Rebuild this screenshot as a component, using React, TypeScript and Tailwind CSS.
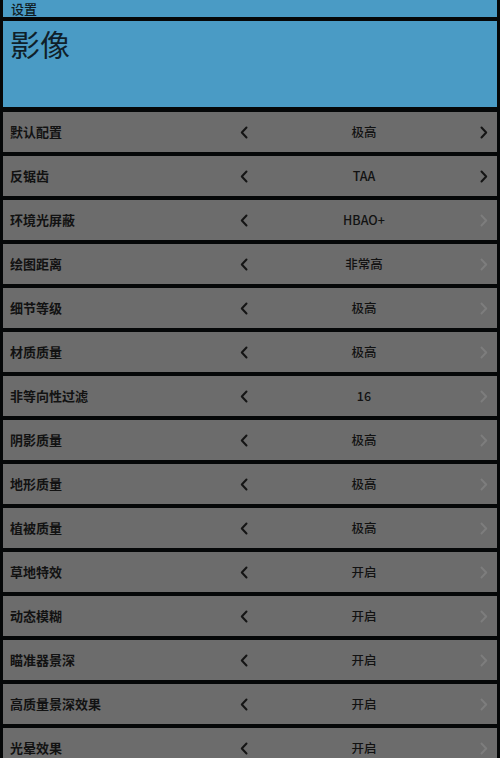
const rows: { label: string; value: string; next: boolean }[] = [
  { label: '默认配置', value: '极高', next: true },
  { label: '反锯齿', value: 'TAA', next: true },
  { label: '环境光屏蔽', value: 'HBAO+', next: false },
  { label: '绘图距离', value: '非常高', next: false },
  { label: '细节等级', value: '极高', next: false },
  { label: '材质质量', value: '极高', next: false },
  { label: '非等向性过滤', value: '16', next: false },
  { label: '阴影质量', value: '极高', next: false },
  { label: '地形质量', value: '极高', next: false },
  { label: '植被质量', value: '极高', next: false },
  { label: '草地特效', value: '开启', next: false },
  { label: '动态模糊', value: '开启', next: false },
  { label: '瞄准器景深', value: '开启', next: false },
  { label: '高质量景深效果', value: '开启', next: false },
  { label: '光晕效果', value: '开启', next: false },
];

function Chevron({ dir, dim }: { dir: 'left' | 'right'; dim?: boolean }) {
  return (
    <svg width="8" height="13" viewBox="0 0 8 13" className="block">
      <path
        d={dir === 'left' ? 'M6.5 1.5 L1.8 6.5 L6.5 11.5' : 'M1.5 1.5 L6.2 6.5 L1.5 11.5'}
        fill="none"
        stroke={dim ? '#7d7d7d' : '#141414'}
        strokeWidth="2"
        strokeLinecap="round"
        strokeLinejoin="round"
      />
    </svg>
  );
}

export default function App() {
  return (
    <div
      className="w-[500px] h-[758px] overflow-hidden bg-[#050708] px-[3px] flex flex-col"
      style={{ fontFamily: '"Noto Sans CJK SC", "Noto Sans", sans-serif' }}
    >
      {/* Title bar */}
      <div className="h-[17px] shrink-0 bg-[#4a9bc5] flex items-end pl-[8px] overflow-hidden">
        <span className="text-[13px] leading-[17px] font-medium text-[#0f1a22]">设置</span>
      </div>

      {/* Section header */}
      <div className="mt-[4px] h-[86px] shrink-0 bg-[#4a9bc5] px-[7px] pt-[2px]">
        <div className="text-[30px] leading-[40px] text-[#0f1f2a]">影像</div>
      </div>

      {/* Settings list */}
      <div className="mt-[5px] flex flex-col gap-[4px]">
        {rows.map((r) => (
          <div key={r.label} className="h-[40px] shrink-0 bg-[#6c6c6c] flex items-center">
            <div className="w-[233px] pl-[7px] text-[13px] font-bold text-[#121212]">{r.label}</div>
            <div className="w-[16px] flex justify-center">
              <Chevron dir="left" />
            </div>
            <div className="flex-1 text-center text-[12.5px] font-medium text-[#121212]">{r.value}</div>
            <div className="w-[16px] flex justify-center mr-[5px]">
              <Chevron dir="right" dim={!r.next} />
            </div>
          </div>
        ))}
      </div>
    </div>
  );
}
